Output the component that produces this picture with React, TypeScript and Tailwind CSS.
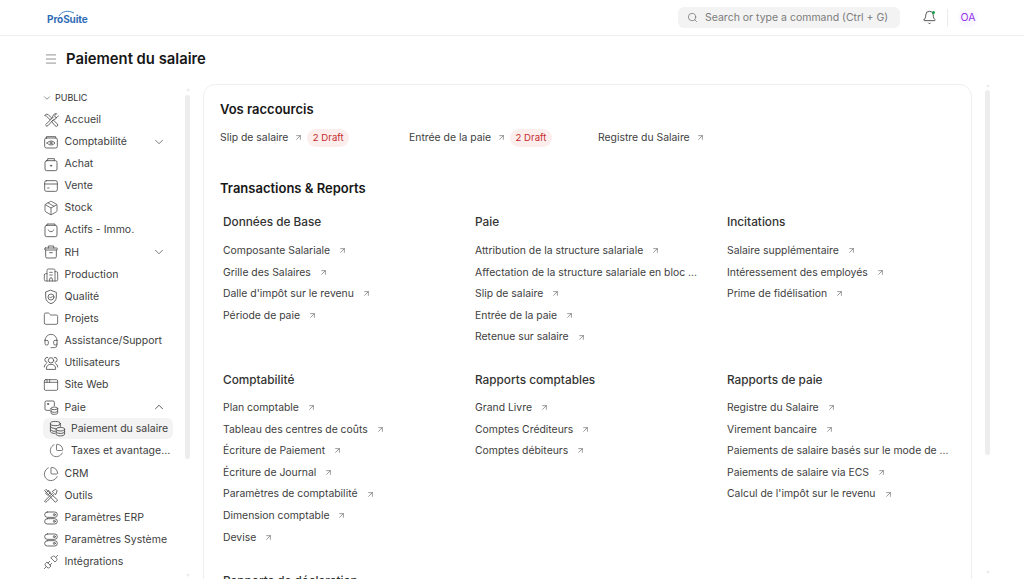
import { ArrowUpRight, Bell, ChevronDown, ChevronUp, Search, Menu, Package, Building2, Folder, Headset, AppWindow, ChartPie, Unplug } from "lucide-react"
import type { ReactNode } from "react"

const svgProps = {
  width: 16,
  height: 16,
  viewBox: "0 0 24 24",
  fill: "none",
  stroke: "currentColor",
  strokeWidth: 1.3,
  strokeLinecap: "round" as const,
  strokeLinejoin: "round" as const,
}

const Tools = () => (
  <svg {...svgProps}>
    <path d="M14.500 8.500a5 5 0 0 1 6-6l-3 3 .8 2.200 2.200.8 3-3" />
    <path d="M14.500 8.500L5 18l-1 1 1.500 2.500L8 20l7.500-8.500a5 5 0 0 0 5-3.500" />
    <path d="M3 5l2-2 3 1 5 5-2.500 2.500-5-5zM13.500 14l2-2 6 6a2 2 0 0 1-3 3z" />
  </svg>
)
const Accounting = () => (
  <svg {...svgProps}>
    <path d="M5 6V4h14v2" />
    <rect x="2.500" y="6" width="19" height="15" rx="2.500" />
    <path d="M6 13.500c3.500-4 8.500-4 12 0-3.500 4-8.500 4-12 0z" />
    <circle cx="12" cy="13.500" r="1.500" />
  </svg>
)
const Bag = () => (
  <svg {...svgProps}>
    <path d="M7 7V4h10v3" />
    <rect x="3" y="7" width="18" height="15" rx="2.500" />
    <circle cx="12" cy="14.500" r="1" />
  </svg>
)
const Card = () => (
  <svg {...svgProps}>
    <rect x="2.500" y="4" width="19" height="16" rx="2.500" />
    <path d="M2.500 9h19M7 15h2" />
  </svg>
)
const Smile = () => (
  <svg {...svgProps}>
    <path d="M6 5V3h12v2" />
    <rect x="3" y="5" width="18" height="17" rx="2.500" />
    <path d="M8 12c1 3.500 7 3.500 8 0" />
  </svg>
)
const Shield = () => (
  <svg {...svgProps}>
    <path d="M12 2l8 3v7c0 5-3.500 8.500-8 10-4.500-1.500-8-5-8-10V5z" />
    <circle cx="12" cy="12" r="4.500" />
    <path d="M10 12l1.500 1.500L14 11" />
  </svg>
)
const Case = () => (
  <svg {...svgProps}>
    <path d="M8 6V3h8v3" />
    <rect x="2.500" y="6" width="19" height="3" rx="1" />
    <path d="M4 9v10a2 2 0 0 0 2 2h12a2 2 0 0 0 2-2V9M10 13h4" />
  </svg>
)
const People = () => (
  <svg {...svgProps}>
    <circle cx="12" cy="8" r="4" />
    <path d="M5 21c0-5 3-7 7-7s7 2 7 7zM6 11a3.500 3.500 0 0 1 1-7.500M18 11a3.500 3.500 0 0 0-1-7.500M2 18c0-2.500 1-4 3-5M22 18c0-2.500-1-4-3-5" />
  </svg>
)
const Pay = () => (
  <svg {...svgProps}>
    <path d="M10 17H5a2 2 0 0 1-2-2V5a2 2 0 0 1 2-2h10a2 2 0 0 1 2 2v5" />
    <circle cx="7.500" cy="7.500" r="1" />
    <ellipse cx="17" cy="14" rx="5" ry="2" />
    <path d="M12 14v7c0 1 2 2 5 2s5-1 5-2v-7M12 18c0 1 2 2 5 2s5-1 5-2" />
  </svg>
)
const Coins = () => (
  <svg {...svgProps} width={17} height={17}>
    <ellipse cx="9" cy="5" rx="7" ry="3" />
    <path d="M2 5v11c0 1.500 2.500 3 6 3M16 5v4M2 9c0 1.500 3 3 7 3M2 13c0 1.500 2.500 3 6 3" />
    <ellipse cx="16" cy="13" rx="6" ry="2.500" />
    <path d="M10 13v7c0 1.500 3 2.500 6 2.500s6-1 6-2.500v-7M10 16.500c0 1.500 3 2.500 6 2.500s6-1 6-2.500" />
  </svg>
)
const Crossed = () => (
  <svg {...svgProps}>
    <path d="M4 2.500l-1.500 1.500 16 17.500 3-3z" />
    <path d="M8 4L4 8l3 3 4-4zM20 3l-1-1-5 3 1.500 1.500L4 18l-1.500 2L4 21.500l2-1.500L17.500 8.500 19 10l2-5z" />
  </svg>
)
const Toggles = () => (
  <svg {...svgProps}>
    <rect x="2.500" y="3" width="19" height="8" rx="4" />
    <rect x="2.500" y="13" width="19" height="8" rx="4" />
    <circle cx="17" cy="7" r="1.500" />
    <circle cx="17" cy="17" r="1.500" />
  </svg>
)

interface NavItem {
  label: string
  icon: ReactNode
  chevron?: "down" | "up"
}

const nav: NavItem[] = [
  { label: "Accueil", icon: <Tools /> },
  { label: "Comptabilité", icon: <Accounting />, chevron: "down" },
  { label: "Achat", icon: <Bag /> },
  { label: "Vente", icon: <Card /> },
  { label: "Stock", icon: <Package size={16} strokeWidth={1.2} /> },
  { label: "Actifs - Immo.", icon: <Smile /> },
  { label: "RH", icon: <Case />, chevron: "down" },
  { label: "Production", icon: <Building2 size={16} strokeWidth={1.2} /> },
  { label: "Qualité", icon: <Shield /> },
  { label: "Projets", icon: <Folder size={16} strokeWidth={1.2} /> },
  { label: "Assistance/Support", icon: <Headset size={16} strokeWidth={1.2} /> },
  { label: "Utilisateurs", icon: <People /> },
  { label: "Site Web", icon: <AppWindow size={16} strokeWidth={1.2} /> },
  { label: "Paie", icon: <Pay />, chevron: "up" },
]

const navAfter: NavItem[] = [
  { label: "CRM", icon: <ChartPie size={16} strokeWidth={1.2} /> },
  { label: "Outils", icon: <Crossed /> },
  { label: "Paramètres ERP", icon: <Toggles /> },
  { label: "Paramètres Système", icon: <Toggles /> },
  { label: "Intégrations", icon: <Unplug size={16} strokeWidth={1.2} /> },
]

const sections = [
  {
    title: "Données de Base",
    links: ["Composante Salariale", "Grille des Salaires", "Dalle d'impôt sur le revenu", "Période de paie"],
  },
  {
    title: "Paie",
    links: [
      "Attribution de la structure salariale",
      "Affectation de la structure salariale en bloc ...",
      "Slip de salaire",
      "Entrée de la paie",
      "Retenue sur salaire",
    ],
  },
  {
    title: "Incitations",
    links: ["Salaire supplémentaire", "Intéressement des employés", "Prime de fidélisation"],
  },
  {
    title: "Comptabilité",
    links: [
      "Plan comptable",
      "Tableau des centres de coûts",
      "Écriture de Paiement",
      "Écriture de Journal",
      "Paramètres de comptabilité",
      "Dimension comptable",
      "Devise",
    ],
  },
  {
    title: "Rapports comptables",
    links: ["Grand Livre", "Comptes Créditeurs", "Comptes débiteurs"],
  },
  {
    title: "Rapports de paie",
    links: [
      "Registre du Salaire",
      "Virement bancaire",
      "Paiements de salaire basés sur le mode de ...",
      "Paiements de salaire via ECS",
      "Calcul de l'impôt sur le revenu",
    ],
  },
]

const SideRow = ({ item }: { item: NavItem }) => (
  <div className="flex h-[22.15px] items-center text-[#525252]">
    <span className="flex w-[17px] shrink-0 justify-center">{item.icon}</span>
    <span className="ml-[5.5px] flex-1 text-[10.5px] text-[#404040]">{item.label}</span>
    {item.chevron === "down" && <ChevronDown size={14} strokeWidth={1.3} className="mr-[8.5px]" />}
    {item.chevron === "up" && <ChevronUp size={14} strokeWidth={1.6} className="mr-[8.5px]" />}
  </div>
)

const Scrollbar = ({ thumb }: { thumb: string }) => (
  <div className="flex h-full w-[5px] shrink-0 flex-col items-center">
    <div className="h-0 w-0 border-x-[2.5px] border-b-[3px] border-x-transparent border-b-[#ececec]" />
    <div className={`w-[5px] rounded-full bg-[#ededed] ${thumb}`} />
    <div className="flex-1" />
    <div className="h-0 w-0 border-x-[2.5px] border-t-[3px] border-x-transparent border-t-[#ececec]" />
  </div>
)

const LinkRow = ({ text }: { text: string }) => (
  <div className="flex h-[21.6px] items-center text-[10.4px] whitespace-nowrap text-[#404040]">
    <span>{text}</span>
    {!text.endsWith("...") && <ArrowUpRight size={9} strokeWidth={1.5} className="ml-[8px] text-[#525252]" />}
  </div>
)

const Shortcut = ({ label, draft, width }: { label: string; draft?: boolean; width: string }) => (
  <div className={`flex items-center text-[10.4px] text-[#404040] ${width}`}>
    <span>{label}</span>
    <ArrowUpRight size={9} strokeWidth={1.5} className="ml-[6px] text-[#525252]" />
    {draft && (
      <span className="ml-[4px] rounded-full bg-[#fdeeee] px-[5.5px] py-[1.5px] text-[9.6px] text-[#c62c2c]">2 Draft</span>
    )}
  </div>
)

export default function App() {
  return (
    <div className="h-[579px] w-[1024px] overflow-hidden bg-white font-['Inter',sans-serif]">
      {/* Header */}
      <header className="flex h-[36px] items-center border-b border-[#efefef] pl-[47px] pr-[46px]">
        <div className="relative h-[20px] w-[44px]">
          <svg width="40" height="8" viewBox="0 0 40 8" className="absolute left-[4px] top-[1px]">
            <path d="M8 7C11 2 17 1 23 4" fill="none" stroke="#3b82c4" strokeWidth="1" />
          </svg>
          <span className="absolute left-0 top-[5px] text-[10px] leading-[13px] font-bold tracking-[-0.1px] text-[#2f6db5]">ProSuite</span>
        </div>
        <div className="ml-auto flex h-[21px] w-[222px] items-center rounded-md bg-[#f3f3f3] pl-[9px] text-[10.5px] text-[#7c7c7c]">
          <Search size={11} strokeWidth={1.5} className="mr-[7px] text-[#666666]" />
          Search or type a command (Ctrl + G)
        </div>
        <div className="relative ml-[21.5px]">
          <Bell size={15} strokeWidth={1.3} className="text-[#333333]" />
          <span className="absolute right-[2px] top-[1px] h-[3px] w-[3px] rounded-full bg-[#16a34a]" />
        </div>
        <div className="ml-[10.5px] h-[18px] w-px bg-[#ebebeb]" />
        <div className="ml-[10px] flex h-[20px] w-[20px] items-center justify-center rounded-full bg-[#fbf8ff] text-[10.5px] text-[#9333ea]">OA</div>
      </header>

      {/* Page title */}
      <div className="flex h-[46px] items-center pl-[44px]">
        <Menu size={14} strokeWidth={1.1} className="text-[#555555]" />
        <h1 className="ml-[8px] text-[14.8px] font-semibold text-[#171717]">Paiement du salaire</h1>
      </div>

      <div className="flex h-[497px] pl-[42px]">
        {/* Sidebar */}
        <aside className="flex h-full w-[148px] shrink-0 pt-[8px]">
          <div className="w-[132px] shrink-0 pt-[1px]">
            <div className="mb-[3.5px] flex h-[14px] items-center text-[9px] text-[#333333]">
              <ChevronDown size={10} strokeWidth={1.3} className="mr-[3px]" />
              PUBLIC
            </div>
            {nav.map((item) => (
              <SideRow key={item.label} item={item} />
            ))}
            <div className="ml-[1px] flex h-[21px] w-[130px] items-center rounded-md bg-[#f3f3f3] text-[#525252]">
              <span className="ml-[6px]"><Coins /></span>
              <span className="ml-[5px] text-[10.5px] text-[#404040]">Paiement du salaire</span>
            </div>
            <div className="flex h-[23px] items-center pl-[7px] text-[#525252]">
              <ChartPie size={15} strokeWidth={1.2} />
              <span className="ml-[7px] whitespace-nowrap text-[10.5px] text-[#404040]">Taxes et avantage…</span>
            </div>
            {navAfter.map((item) => (
              <SideRow key={item.label} item={item} />
            ))}
          </div>
          <div className="-mt-[2px] ml-[11px] h-[489px]">
            <Scrollbar thumb="mt-[4px] h-[364px]" />
          </div>
        </aside>

        {/* Content */}
        <main className="ml-[13px] mt-[2px] h-[600px] w-[769px] shrink-0 rounded-xl border border-[#efefef] px-[16px] pt-[15px]">
          <h2 className="text-[13px] leading-[18px] font-semibold text-[#171717]">Vos raccourcis</h2>
          <div className="mt-[11px] flex h-[18px] items-center">
            <Shortcut label="Slip de salaire" draft width="w-[189px]" />
            <Shortcut label="Entrée de la paie" draft width="w-[189px]" />
            <Shortcut label="Registre du Salaire" width="w-[189px]" />
          </div>
          <h2 className="mt-[32px] text-[13px] leading-[18px] font-semibold text-[#171717]">Transactions &amp; Reports</h2>
          <div className="mt-[17px] grid grid-cols-[252px_252px_252px] pl-[3px]">
            {sections.map((section, i) => (
              <div key={section.title} className={i < 3 ? "h-[158px]" : "h-[201px]"}>
                <h3 className={`h-[17px] text-[11.8px] leading-[17px] font-medium text-[#333333] ${i < 3 ? "mb-[9px]" : "mb-[8px]"}`}>{section.title}</h3>
                {section.links.map((link) => (
                  <LinkRow key={link} text={link} />
                ))}
              </div>
            ))}
            <h3 className="text-[11.8px] leading-[17px] font-medium text-[#333333]">Rapports de déclaration</h3>
          </div>
        </main>

        <div className="ml-[13px] mt-[2px] h-[490px]">
          <Scrollbar thumb="mt-[3px] h-[365px]" />
        </div>
      </div>
    </div>
  )
}
